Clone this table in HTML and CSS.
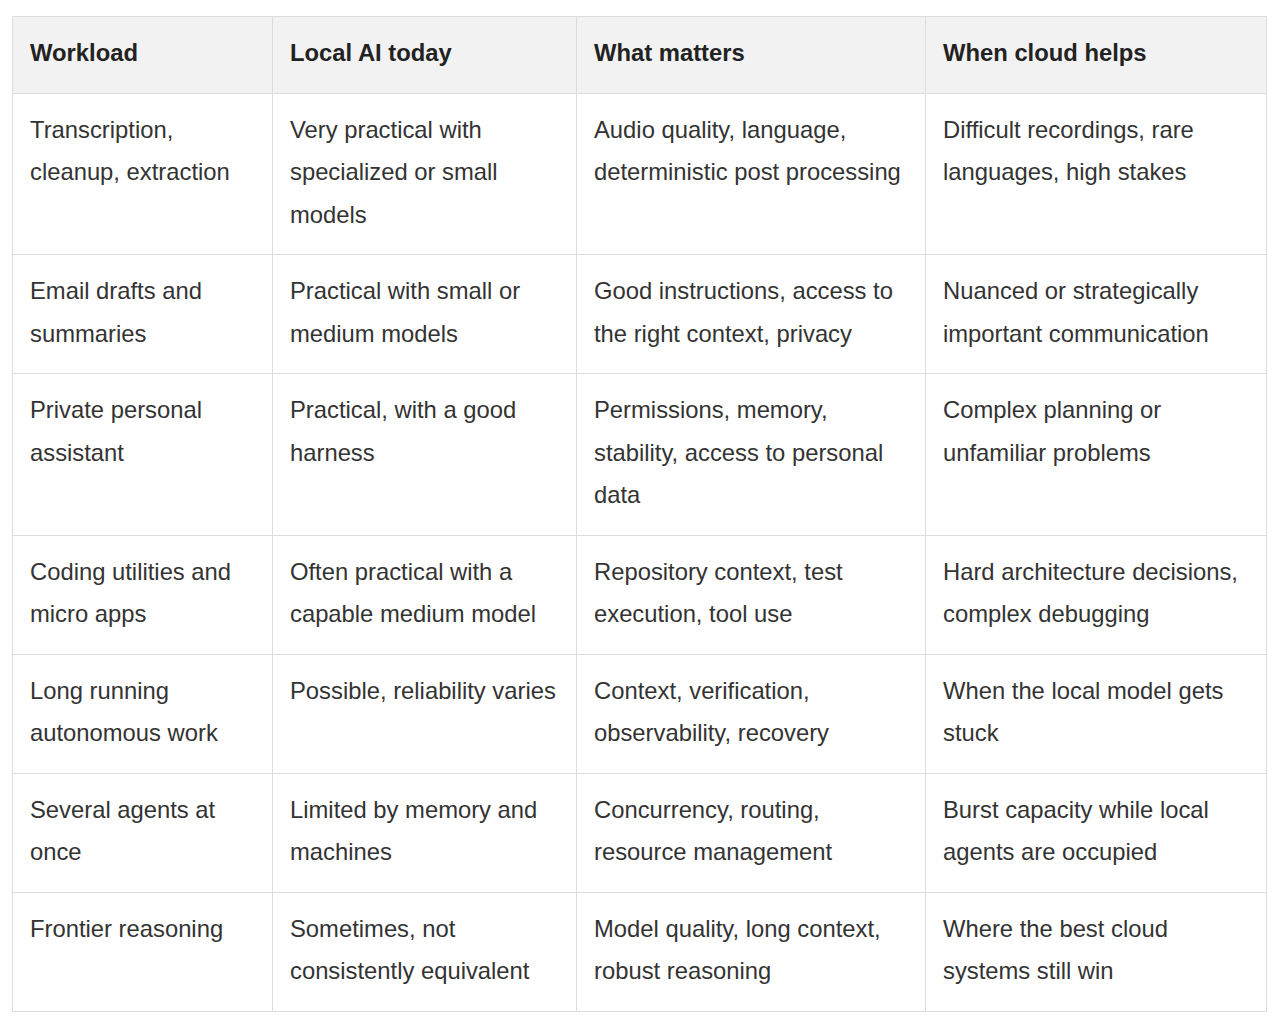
FILE: index.html
```html
<!DOCTYPE html>
<html>
<head>
<meta charset="utf-8">
<link rel="stylesheet" href="styles.css">
</head>
<body>
<div class="wrap">
<table class="grid">
<colgroup>
<col class="c1"><col class="c2"><col class="c3"><col class="c4">
</colgroup>
<thead>
<tr><th>Workload</th><th>Local AI today</th><th>What matters</th><th>When cloud helps</th></tr>
</thead>
<tbody>
<tr><td>Transcription, cleanup, extraction</td><td>Very practical with specialized or small models</td><td>Audio quality, language, deterministic post processing</td><td>Difficult recordings, rare languages, high stakes</td></tr>
<tr><td>Email drafts and summaries</td><td>Practical with small or medium models</td><td>Good instructions, access to the right context, privacy</td><td>Nuanced or strategically important communication</td></tr>
<tr><td>Private personal assistant</td><td>Practical, with a good harness</td><td>Permissions, memory, stability, access to personal data</td><td>Complex planning or unfamiliar problems</td></tr>
<tr><td>Coding utilities and micro apps</td><td>Often practical with a capable medium model</td><td>Repository context, test execution, tool use</td><td>Hard architecture decisions, complex debugging</td></tr>
<tr><td>Long running autonomous work</td><td>Possible, reliability varies</td><td>Context, verification, observability, recovery</td><td>When the local model gets stuck</td></tr>
<tr><td>Several agents at once</td><td>Limited by memory and machines</td><td>Concurrency, routing, resource management</td><td>Burst capacity while local agents are occupied</td></tr>
<tr><td>Frontier reasoning</td><td>Sometimes, not consistently equivalent</td><td>Model quality, long context, robust reasoning</td><td>Where the best cloud systems still win</td></tr>
</tbody>
</table>
</div>
</body>
</html>
```
FILE: styles.css
```css
html, body {
  margin: 0;
  padding: 0;
  background: #ffffff;
}
.wrap {
  padding: 16px 0 0 12px;
}
.grid {
  border-collapse: collapse;
  table-layout: fixed;
  width: 1254px;
  font-family: "Liberation Sans", Arial, Helvetica, sans-serif;
  font-size: 23.8px;
  line-height: 42.5px;
  color: #333333;
}
.c1 { width: 260px; }
.c2 { width: 304px; }
.c3 { width: 349px; }
.c4 { width: 341px; }
.grid th, .grid td {
  border: 1px solid #dddddd;
  padding: 15px 17px 18px 17px;
  text-align: left;
  vertical-align: top;
}
.grid th {
  background: #f2f2f2;
  font-weight: bold;
  color: #222222;
}
```
